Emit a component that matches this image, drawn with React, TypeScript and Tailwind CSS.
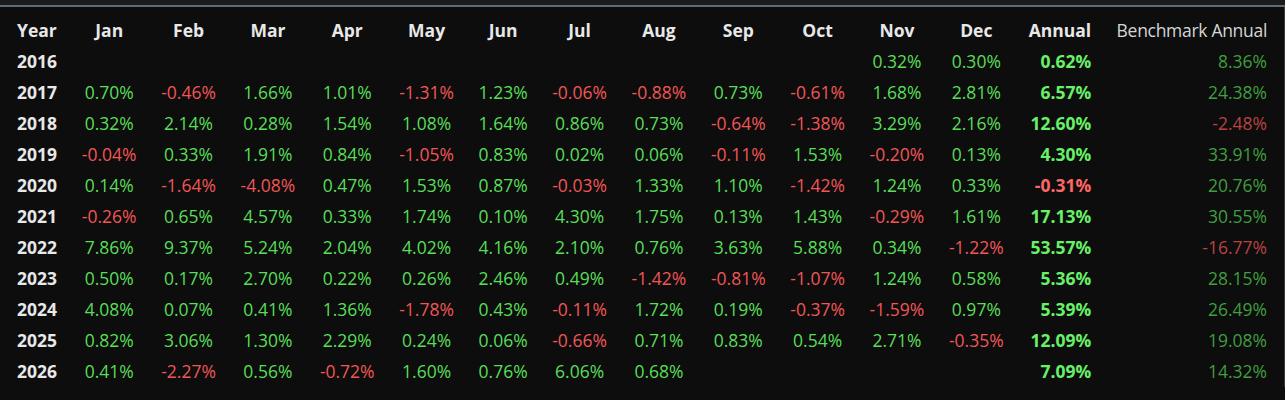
import React from 'react';

type Row = {
  year: number;
  months: (number | null)[];
  annual: number;
  bench: number;
};

const MONTHS = ['Jan', 'Feb', 'Mar', 'Apr', 'May', 'Jun', 'Jul', 'Aug', 'Sep', 'Oct', 'Nov', 'Dec'];

const n = null;

const ROWS: Row[] = [
  { year: 2016, months: [n, n, n, n, n, n, n, n, n, n, 0.32, 0.3], annual: 0.62, bench: 8.36 },
  { year: 2017, months: [0.7, -0.46, 1.66, 1.01, -1.31, 1.23, -0.06, -0.88, 0.73, -0.61, 1.68, 2.81], annual: 6.57, bench: 24.38 },
  { year: 2018, months: [0.32, 2.14, 0.28, 1.54, 1.08, 1.64, 0.86, 0.73, -0.64, -1.38, 3.29, 2.16], annual: 12.6, bench: -2.48 },
  { year: 2019, months: [-0.04, 0.33, 1.91, 0.84, -1.05, 0.83, 0.02, 0.06, -0.11, 1.53, -0.2, 0.13], annual: 4.3, bench: 33.91 },
  { year: 2020, months: [0.14, -1.64, -4.08, 0.47, 1.53, 0.87, -0.03, 1.33, 1.1, -1.42, 1.24, 0.33], annual: -0.31, bench: 20.76 },
  { year: 2021, months: [-0.26, 0.65, 4.57, 0.33, 1.74, 0.1, 4.3, 1.75, 0.13, 1.43, -0.29, 1.61], annual: 17.13, bench: 30.55 },
  { year: 2022, months: [7.86, 9.37, 5.24, 2.04, 4.02, 4.16, 2.1, 0.76, 3.63, 5.88, 0.34, -1.22], annual: 53.57, bench: -16.77 },
  { year: 2023, months: [0.5, 0.17, 2.7, 0.22, 0.26, 2.46, 0.49, -1.42, -0.81, -1.07, 1.24, 0.58], annual: 5.36, bench: 28.15 },
  { year: 2024, months: [4.08, 0.07, 0.41, 1.36, -1.78, 0.43, -0.11, 1.72, 0.19, -0.37, -1.59, 0.97], annual: 5.39, bench: 26.49 },
  { year: 2025, months: [0.82, 3.06, 1.3, 2.29, 0.24, 0.06, -0.66, 0.71, 0.83, 0.54, 2.71, -0.35], annual: 12.09, bench: 19.08 },
  { year: 2026, months: [0.41, -2.27, 0.56, -0.72, 1.6, 0.76, 6.06, 0.68, n, n, n, n], annual: 7.09, bench: 14.32 },
];

const fmt = (v: number) => `${v.toFixed(2)}%`;

export default function App() {
  return (
    <div
      className="min-h-[400px] bg-[#0d0d0d] text-[17.5px] text-[#e8e8e8]"
      style={{ fontFamily: '"Open Sans", "Noto Sans", sans-serif' }}
    >
      <div className="h-[5px] bg-[#1b1b1b]" />
      <div className="h-[2px] bg-[#5d6c7b]" />
      <div className="border-r border-[#3a3a3a] px-[5px] pt-[8px]">
        <table className="w-full border-collapse">
          <thead>
            <tr className="h-[31px]">
              <th className="px-3 text-left font-bold">Year</th>
              {MONTHS.map((m) => (
                <th key={m} className="px-3 text-center font-bold">
                  {m}
                </th>
              ))}
              <th className="px-3 text-right font-bold">Annual</th>
              <th className="px-3 text-right font-normal tracking-[-0.3px] text-[#d6d6d6]">
                Benchmark Annual
              </th>
            </tr>
          </thead>
          <tbody>
            {ROWS.map((r) => (
              <tr key={r.year} className="h-[31px]">
                <td className="px-3 text-left font-bold">{r.year}</td>
                {r.months.map((v, i) => (
                  <td
                    key={i}
                    className={`px-3 text-center ${v !== null && v < 0 ? 'text-[#f05656]' : 'text-[#58de58]'}`}
                  >
                    {v === null ? '' : fmt(v)}
                  </td>
                ))}
                <td
                  className={`px-3 text-right font-bold ${r.annual < 0 ? 'text-[#ff6666]' : 'text-[#68f068]'}`}
                >
                  {fmt(r.annual)}
                </td>
                <td className={`px-3 text-right ${r.bench < 0 ? 'text-[#b84242]' : 'text-[#3f9e3f]'}`}>
                  {fmt(r.bench)}
                </td>
              </tr>
            ))}
          </tbody>
        </table>
      </div>
    </div>
  );
}
